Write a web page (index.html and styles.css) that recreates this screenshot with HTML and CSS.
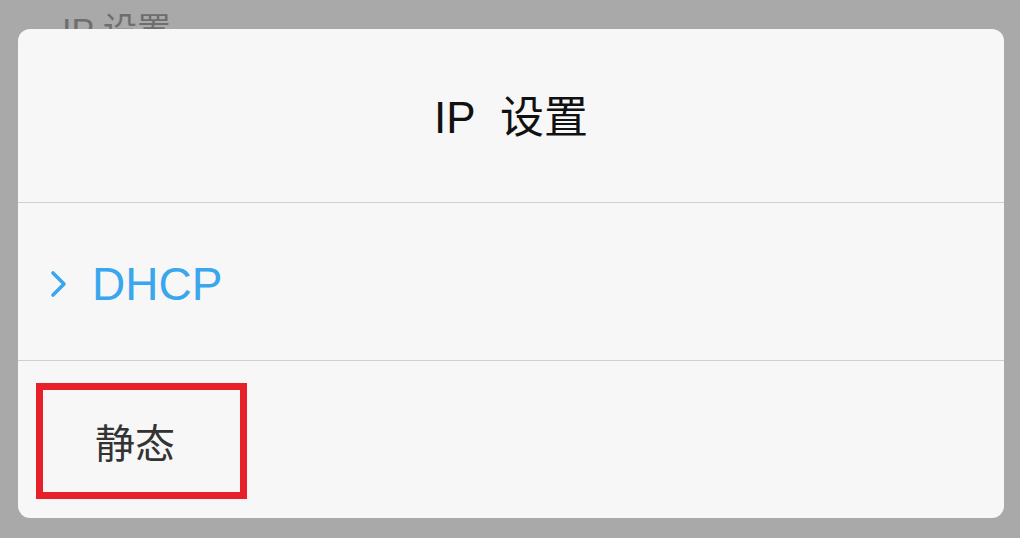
FILE: index.html
```html
<!DOCTYPE html>
<html>
<head>
<meta charset="utf-8">
<link rel="stylesheet" href="styles.css">
</head>
<body>
<div class="page">
  <div class="page-title">IP 设置</div>
</div>
<div class="dialog">
  <div class="dialog-head">IP&nbsp; 设置</div>
  <div class="option selected">
    <svg class="chev" width="20" height="30" viewBox="0 0 20 30"><path d="M4 4 L15 15 L4 26" fill="none" stroke="#3aa6ee" stroke-width="3.6" stroke-linecap="round" stroke-linejoin="round"/></svg>
    <span>DHCP</span>
  </div>
  <div class="option last">
    <span class="mark">静态</span>
  </div>
</div>
</body>
</html>
```
FILE: styles.css
```css
html, body {
  margin: 0;
  padding: 0;
  width: 1020px;
  height: 538px;
  overflow: hidden;
  background: #a9a9a9;
  font-family: "Liberation Sans", "Noto Sans CJK SC", sans-serif;
}
.page {
  padding: 10px 0 0 62px;
}
.page-title {
  font-size: 34px;
  color: #6e6e6e;
  line-height: 40px;
}
.dialog {
  position: absolute;
  left: 18px;
  top: 29px;
  width: 986px;
  height: 489px;
  background: #f7f7f7;
  border-radius: 12px;
  display: flex;
  flex-direction: column;
}
.dialog-head {
  height: 174px;
  box-sizing: border-box;
  border-bottom: 1.5px solid #cfcfcf;
  display: flex;
  align-items: center;
  justify-content: center;
  font-size: 44px;
  color: #111;
  padding-bottom: 4px;
}
.option {
  height: 158px;
  box-sizing: border-box;
  display: flex;
  align-items: center;
  font-size: 43px;
  color: #333;
}
.option.selected {
  border-bottom: 1.5px solid #cfcfcf;
  color: #3aa6ee;
  padding-left: 31px;
  padding-top: 4px;
  font-size: 46px;
}
.chev {
  margin-right: 23px;
}
.option.last {
  height: 157px;
  align-items: flex-start;
  padding-left: 18px;
  padding-top: 22px;
}
.mark {
  height: 102px;
  border: 7px solid #e8202a;
  display: flex;
  align-items: center;
  padding-left: 52px;
  box-sizing: content-box;
  font-family: "Noto Sans CJK SC", sans-serif;
  font-size: 40px;
  width: 145px;
}
```
